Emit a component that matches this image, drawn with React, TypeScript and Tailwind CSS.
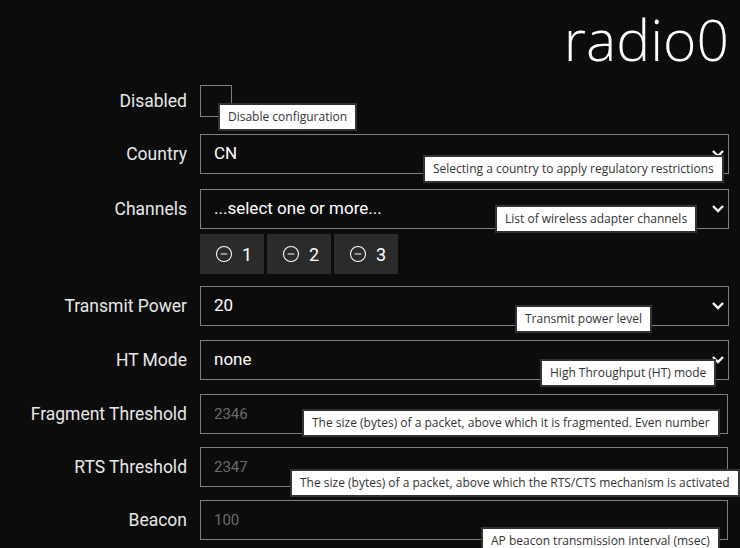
import { CircleMinus } from "lucide-react";

const Tip = ({ text, left, top }: { text: string; left: number; top: number }) => (
  <div
    className="absolute z-10 h-[28px] flex items-center whitespace-nowrap bg-white border-2 border-[#333] px-[8px] text-[12px] text-[#333] font-['Open_Sans',sans-serif]"
    style={{ left, top }}
  >
    {text}
  </div>
);

const Chevron = () => (
  <svg width="12" height="8" viewBox="0 0 12 8" className="shrink-0">
    <polyline points="1,1 6,6 11,1" fill="none" stroke="#fff" strokeWidth="2.4" />
  </svg>
);

const Row = ({
  label,
  className,
  children,
}: {
  label: string;
  className?: string;
  children: React.ReactNode;
}) => (
  <div className={"flex items-center " + (className ?? "")}>
    <div className="w-[187px] text-right text-[17.5px] text-[#e8e8e8]">{label}</div>
    <div className="ml-[13px] flex-1 relative">{children}</div>
  </div>
);

const Select = ({ value, tip }: { value: string; tip?: React.ReactNode }) => (
  <div className="h-[40px] border border-[#808080] flex items-center justify-between pl-[13px] pr-[4px]">
    <span className="text-[17px] text-white">{value}</span>
    <Chevron />
    {tip}
  </div>
);

const Input = ({ value, tip }: { value: string; tip?: React.ReactNode }) => (
  <div className="h-[40px] mr-[1px] border border-[#808080] flex items-center pl-[13px]">
    <span className="text-[15px] text-[#6b6b6b]">{value}</span>
    {tip}
  </div>
);

export default function App() {
  return (
    <div className="w-[740px] h-[548px] overflow-hidden bg-[#0c0c0c] font-['Roboto',sans-serif] pr-[11px]">
      <div className="h-[85px] text-right font-['Open_Sans',sans-serif] font-light text-[57px] leading-[78px] text-white">
        radio0
      </div>

      <Row label="Disabled" className="h-[32px]">
        <div className="w-[32px] h-[32px] border border-[#808080]" />
        <Tip text="Disable configuration" left={18} top={18} />
      </Row>

      <Row label="Country" className="mt-[17px]">
        <Select value="CN" tip={<Tip text="Selecting a country to apply regulatory restrictions" left={223} top={21} />} />
      </Row>

      <Row label="Channels" className="mt-[15px]">
        <Select value="...select one or more..." tip={<Tip text="List of wireless adapter channels" left={295} top={16} />} />
      </Row>

      <div className="mt-[5px] ml-[200px] flex gap-[3px]">
        {["1", "2", "3"].map((n) => (
          <div key={n} className="w-[64px] h-[40px] bg-[#2b2b2b] flex items-center pl-[15px] gap-[9px] text-[18px] text-white">
            <CircleMinus size={18} strokeWidth={1.4} />
            <span>{n}</span>
          </div>
        ))}
      </div>

      <Row label="Transmit Power" className="mt-[12px]">
        <Select value="20" tip={<Tip text="Transmit power level" left={315} top={19} />} />
      </Row>

      <Row label="HT Mode" className="mt-[14px]">
        <Select value="none" tip={<Tip text="High Throughput (HT) mode" left={340} top={19} />} />
      </Row>

      <Row label="Fragment Threshold" className="mt-[14px]">
        <Input value="2346" tip={<Tip text="The size (bytes) of a packet, above which it is fragmented. Even number" left={102} top={15} />} />
      </Row>

      <Row label="RTS Threshold" className="mt-[13px]">
        <Input value="2347" tip={<Tip text="The size (bytes) of a packet, above which the RTS/CTS mechanism is activated" left={90} top={22} />} />
      </Row>

      <Row label="Beacon" className="mt-[13px]">
        <Input value="100" tip={<Tip text="AP beacon transmission interval (msec)" left={281} top={27} />} />
      </Row>
    </div>
  );
}
